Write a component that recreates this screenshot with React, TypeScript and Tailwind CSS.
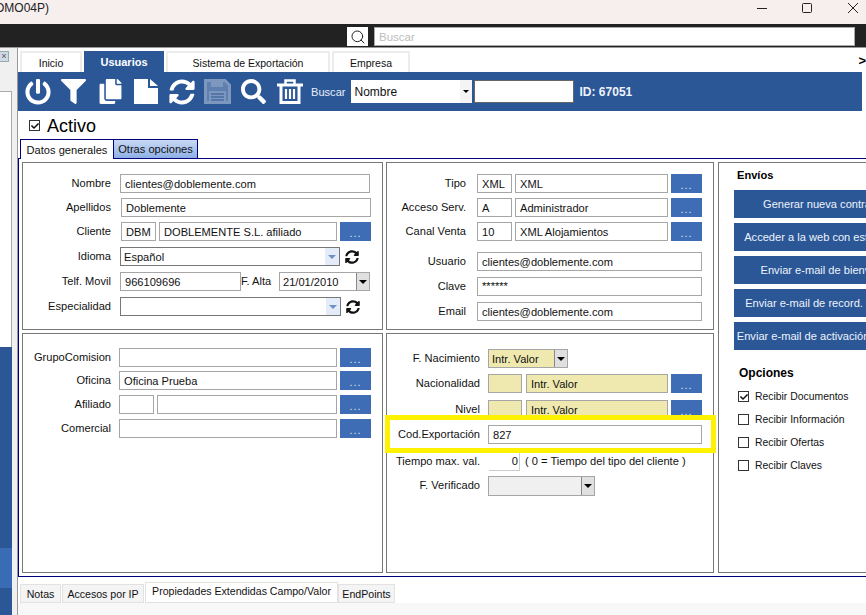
import React from "react";
import { FaPowerOff, FaFilter, FaCopy, FaSyncAlt, FaSearch, FaCheck } from "react-icons/fa";
import { Search } from "lucide-react";

const Lbl = ({ children, w }: { children: React.ReactNode; w: string }) => (
  <div className={`${w} shrink-0 text-right whitespace-nowrap pb-[2px]`}>{children}</div>
);

const Inp = ({ w, v, y, cls }: { w: string; v?: string; y?: boolean; cls?: string }) => (
  <div className={`${w} ${cls ?? ""} h-full shrink-0 border border-[#a6a6a6] pl-[4px] flex items-center whitespace-nowrap overflow-hidden ${y ? "bg-[#efe9b0]" : "bg-white"}`}>{v}</div>
);

const Dots = () => (
  <div className="w-[31px] h-full shrink-0 bg-[#3f6db5] text-[#dfe8f6] flex items-end justify-center pb-[2px] leading-[12px] text-[11px] tracking-[1px]">...</div>
);

const Combo = ({ w, v }: { w: string; v?: string }) => (
  <div className={`${w} h-full shrink-0 border border-[#777] bg-white pl-[3px] flex items-center justify-between`}>
    <span>{v}</span>
    <div className="w-[14px] h-full bg-[#e3ecf8] flex items-center justify-center">
      <div className="w-0 h-0 border-l-[4px] border-r-[4px] border-t-[4px] border-l-transparent border-r-transparent border-t-[#6d90c8]" />
    </div>
  </div>
);

const Drop = ({ w, v, bg }: { w: string; v?: string; bg: string }) => (
  <div className={`${w} ${bg} h-full shrink-0 border border-[#a6a6a6] pl-[3px] flex items-center justify-between`}>
    <span>{v}</span>
    <div className="w-[13px] h-full bg-[#e0e0e0] border-l border-[#888] flex items-center justify-center">
      <div className="w-0 h-0 border-l-[4px] border-r-[4px] border-t-[4px] border-l-transparent border-r-transparent border-t-black" />
    </div>
  </div>
);

const Tab = ({ w, t, active }: { w: string; t: string; active?: boolean }) => (
  <div className={`${w} h-[21px] flex items-center justify-center whitespace-nowrap ${active ? "bg-[#2b5797] text-white font-bold text-[11px]" : "bg-white border-2 border-b-0 border-[#ececec] text-[10.5px]"}`}>{t}</div>
);

const BTab = ({ w, t, active }: { w: string; t: string; active?: boolean }) => (
  <div className={`${w} flex items-center justify-center whitespace-nowrap border border-[#e2e2e2] text-[10.6px] ${active ? "h-[21px] bg-white pb-[3px]" : "h-[19px] bg-[#f4f4f4]"}`}>{t}</div>
);

const Box = ({ cls, children }: { cls: string; children: React.ReactNode }) => (
  <div className={`${cls} relative border border-[#777] bg-white flex flex-col shrink-0`}>{children}</div>
);

const SendBtn = ({ t }: { t: string }) => (
  <div className="w-[190px] h-[28px] bg-[#2b5797] text-[#eef3fb] flex items-center justify-center whitespace-nowrap mb-[5px]">{t}</div>
);

const Opt = ({ t, on }: { t: string; on?: boolean }) => (
  <div className="flex items-center h-[23px] pl-[19px]">
    <div className="w-[11px] h-[11px] border border-[#333] bg-white flex items-center justify-center mr-[6px]">
      {on && <FaCheck size={8} color="#111" />}
    </div>
    <span className="text-[10.4px]">{t}</span>
  </div>
);

const Sync = () => <FaSyncAlt size={14} color="#111" className="ml-[5px] shrink-0" />;

const FileIcon = () => (
  <svg width="24" height="25" viewBox="0 0 24 25" fill="#fff">
    <path d="M0 0H14V9H24V25H0Z" />
    <path d="M16 0L24 7H16Z" />
  </svg>
);

const SaveIcon = () => (
  <svg width="27" height="25" viewBox="0 0 27 25" fill="none">
    <path d="M1.5 1.5H21L25.5 6V23.5H1.5Z" stroke="#7e97bd" strokeWidth="3" fill="#5f7fb0" />
    <rect x="7" y="1" width="12" height="7" fill="#7e97bd" />
    <rect x="5" y="12" width="17" height="11" fill="#7e97bd" />
    <path d="M7 15H20M7 18H20M7 21H20" stroke="#2b5797" strokeWidth="1" />
  </svg>
);

const TrashIcon = () => (
  <svg width="26" height="25" viewBox="0 0 26 25" fill="none" stroke="#fff">
    <path d="M0 6H26" strokeWidth="3" />
    <path d="M8.5 5V1.5H17.5V5" strokeWidth="2.5" />
    <path d="M4 6V23.5H22V6" strokeWidth="3" />
    <path d="M9 10V20M13 10V20M17 10V20" strokeWidth="2.2" />
  </svg>
);

export default function App() {
  const rowL = "flex items-center h-[19px]";
  return (
    <div className="w-[866px] h-[615px] overflow-hidden flex flex-col bg-white text-[11.1px] leading-[14px] text-[#111] font-['Liberation_Sans',sans-serif]">
      {/* Title bar */}
      <div className="h-[24px] shrink-0 bg-[#f7eeee] flex items-center justify-between overflow-hidden">
        <span className="-ml-[5px] -mt-[9px] text-[12px] text-[#222]">OMO04P)</span>
        <div className="flex items-center">
          <svg width="120" height="24" viewBox="0 0 120 24" fill="none" stroke="#222" strokeWidth="1">
            <path d="M11 8.5H21" />
            <rect x="56.5" y="3.5" width="9" height="9" rx="1" />
            <path d="M102 3L112 13M112 3L102 13" />
          </svg>
        </div>
      </div>
      {/* Dark search bar */}
      <div className="h-[24px] shrink-0 bg-[#222222] flex items-start pt-[3px] pl-[347px] border-b border-[#999]">
        <div className="w-[21px] h-[19px] bg-white flex items-center justify-center">
          <Search size={16} color="#222" strokeWidth={1.5} />
        </div>
        <div className="w-[481px] h-[19px] ml-[6px] bg-white border border-[#aaa] pl-[4px] flex items-center text-[11.5px] text-[#bdbdbd]">Buscar</div>
      </div>
      {/* Body */}
      <div className="flex-1 flex min-h-0">
        {/* Left rail */}
        <div className="w-[18px] shrink-0 bg-[#f0f0f0] flex flex-col border-r border-[#999]">
          <div className="h-[43px] shrink-0 pt-[3px]">
            <div className="w-[9px] h-[11px] bg-[#cfd8e6] border-y border-r border-[#9aa] flex items-center justify-center text-[9px] leading-[9px] text-[#555]">×</div>
          </div>
          <div className="w-[12px] h-[256px] shrink-0 bg-white border-r border-t border-[#aaa]" />
          <div className="w-[12px] flex-1 bg-[#2b5797] flex flex-col">
            <div className="h-[201px] shrink-0" />
            <div className="h-[40px] shrink-0 bg-[#3a6cb5]" />
          </div>
        </div>
        {/* Main */}
        <div className="flex-1 min-w-0 flex flex-col">
          <div className="h-[24px] shrink-0 pt-[3px] pl-[2px] flex items-start gap-[2px]">
            <Tab w="w-[62px]" t="Inicio" />
            <Tab w="w-[80px]" t="Usuarios" active />
            <Tab w="w-[164px]" t="Sistema de Exportación" />
            <Tab w="w-[78px]" t="Empresa" />
            <div className="flex-1 flex justify-end text-[13px] font-bold text-black leading-[20px]">&gt;</div>
          </div>
          {/* Toolbar */}
          <div className="w-[844px] h-[39px] shrink-0 bg-[#2b5797] flex items-center pl-[7px] text-white">
            <div className="w-[36px] flex"><FaPowerOff size={26} /></div>
            <div className="w-[37px] flex"><FaFilter size={25} /></div>
            <div className="w-[36px] flex"><FaCopy size={25} /></div>
            <div className="w-[35px] flex"><FileIcon /></div>
            <div className="w-[35px] flex"><FaSyncAlt size={26} /></div>
            <div className="w-[37px] flex"><SaveIcon /></div>
            <div className="w-[36px] flex"><FaSearch size={25} /></div>
            <div className="w-[34px] flex"><TrashIcon /></div>
            <span className="text-[#e8eef8]">Buscar</span>
            <div className="w-[121px] h-[23px] ml-[5px] bg-white text-[#111] pl-[4px] flex items-center justify-between text-[12px]">
              <span>Nombre</span>
              <div className="w-[12px] h-full bg-[#f4f4f4] flex items-center justify-center">
                <div className="w-0 h-0 border-l-[3px] border-r-[3px] border-t-[3px] border-l-transparent border-r-transparent border-t-black" />
              </div>
            </div>
            <div className="w-[100px] h-[23px] ml-[2px] bg-white border border-[#666]" />
            <span className="ml-[6px] text-[12px] font-bold text-[#eef3fb]">ID: 67051</span>
          </div>
          {/* Activo */}
          <div className="h-[28px] shrink-0 flex items-center pl-[11px] pt-[1px]">
            <div className="w-[11px] h-[11px] border border-[#333] flex items-center justify-center mr-[7px]"><FaCheck size={8} color="#111" /></div>
            <span className="text-[18px] leading-[22px] text-black">Activo</span>
          </div>
          {/* Inner tabs */}
          <div className="h-[19px] shrink-0 flex pl-[2px]">
            <div className="w-[93px] h-[20px] bg-white border-l border-t border-[#00007f] flex items-center justify-center relative z-10">Datos generales</div>
            <div className="w-[85px] h-[19px] bg-gradient-to-b from-[#c9d9f3] to-[#8fb0e6] border border-b-0 border-[#00007f] flex items-center justify-center">Otras opciones</div>
          </div>
          {/* Frame */}
          <div className="h-[419px] shrink-0 border-t border-b border-l border-[#00007f] pl-[3px] pt-[3px] flex gap-[3px]">
            <div className="flex flex-col gap-[3px]">
              <Box cls="w-[361px] h-[168px]">
                <div className={`${rowL} mt-[11px]`}><Lbl w="w-[88px]">Nombre</Lbl><Inp cls="ml-[9px]" w="w-[250px]" v="clientes@doblemente.com" /></div>
                <div className={`${rowL} mt-[5px]`}><Lbl w="w-[88px]">Apellidos</Lbl><Inp cls="ml-[10px]" w="w-[250px]" v="Doblemente" /></div>
                <div className={`${rowL} mt-[5px]`}><Lbl w="w-[88px]">Cliente</Lbl><Inp cls="ml-[10px]" w="w-[35px]" v="DBM" /><Inp cls="ml-[3px]" w="w-[178px]" v="DOBLEMENTE S.L. afiliado" /><div className="w-[3px]" /><Dots /></div>
                <div className={`${rowL} mt-[6px]`}><Lbl w="w-[88px]">Idioma</Lbl><div className="w-[9px]" /><Combo w="w-[220px]" v="Español" /><Sync /></div>
                <div className={`${rowL} mt-[6px]`}><Lbl w="w-[88px]">Telf. Movil</Lbl><Inp cls="ml-[9px]" w="w-[121px]" v="966109696" /><span className="w-[38px] shrink-0 pb-[2px]">F. Alta</span><Drop w="w-[91px]" v="21/01/2010" bg="bg-white" /></div>
                <div className={`${rowL} mt-[6px]`}><Lbl w="w-[88px]">Especialidad</Lbl><div className="w-[9px]" /><Combo w="w-[221px]" /><Sync /></div>
              </Box>
              <Box cls="w-[361px] h-[240px]">
                <div className={`${rowL} mt-[14px]`}><Lbl w="w-[88px]">GrupoComision</Lbl><Inp cls="ml-[8px]" w="w-[218px]" /><div className="w-[3px]" /><Dots /></div>
                <div className={`${rowL} mt-[4px]`}><Lbl w="w-[88px]">Oficina</Lbl><Inp cls="ml-[8px]" w="w-[218px]" v="Oficina Prueba" /><div className="w-[3px]" /><Dots /></div>
                <div className={`${rowL} mt-[5px]`}><Lbl w="w-[88px]">Afiliado</Lbl><Inp cls="ml-[8px]" w="w-[35px]" /><Inp cls="ml-[3px]" w="w-[180px]" /><div className="w-[3px]" /><Dots /></div>
                <div className={`${rowL} mt-[5px]`}><Lbl w="w-[88px]">Comercial</Lbl><Inp cls="ml-[8px]" w="w-[218px]" /><div className="w-[3px]" /><Dots /></div>
              </Box>
            </div>
            <div className="flex flex-col gap-[3px]">
              <Box cls="w-[328px] h-[168px]">
                <div className={`${rowL} mt-[11px]`}><Lbl w="w-[79px]">Tipo</Lbl><Inp cls="ml-[11px]" w="w-[35px]" v="XML" /><Inp cls="ml-[3px]" w="w-[153px]" v="XML" /><div className="w-[3px]" /><Dots /></div>
                <div className={`${rowL} mt-[5px]`}><Lbl w="w-[79px]">Acceso Serv.</Lbl><Inp cls="ml-[11px]" w="w-[35px]" v="A" /><Inp cls="ml-[3px]" w="w-[153px]" v="Administrador" /><div className="w-[3px]" /><Dots /></div>
                <div className={`${rowL} mt-[5px]`}><Lbl w="w-[79px]">Canal Venta</Lbl><Inp cls="ml-[11px]" w="w-[35px]" v="10" /><Inp cls="ml-[3px]" w="w-[153px]" v="XML Alojamientos" /><div className="w-[3px]" /><Dots /></div>
                <div className={`${rowL} mt-[11px]`}><Lbl w="w-[79px]">Usuario</Lbl><Inp cls="ml-[11px]" w="w-[225px]" v="clientes@doblemente.com" /></div>
                <div className={`${rowL} mt-[6px]`}><Lbl w="w-[79px]">Clave</Lbl><Inp cls="ml-[11px] !items-start pt-[1px]" w="w-[225px]" v="******" /></div>
                <div className={`${rowL} mt-[6px]`}><Lbl w="w-[79px]">Email</Lbl><Inp cls="ml-[11px]" w="w-[225px]" v="clientes@doblemente.com" /></div>
              </Box>
              <Box cls="w-[328px] h-[240px]">
                <div className={`${rowL} mt-[15px]`}><Lbl w="w-[93px]">F. Nacimiento</Lbl><div className="w-[8px]" /><Drop w="w-[80px]" v="Intr. Valor" bg="bg-[#efe9b0]" /></div>
                <div className={`${rowL} mt-[6px]`}><Lbl w="w-[93px]">Nacionalidad</Lbl><Inp cls="ml-[8px]" w="w-[34px]" y /><Inp cls="ml-[4px]" w="w-[142px]" y v="Intr. Valor" /><div className="w-[3px]" /><Dots /></div>
                <div className={`${rowL} mt-[7px]`}><Lbl w="w-[93px]">Nivel</Lbl><Inp cls="ml-[8px]" w="w-[34px]" y /><Inp cls="ml-[4px]" w="w-[142px]" y v="Intr. Valor" /><div className="w-[3px]" /><Dots /></div>
                <div className={`${rowL} mt-[6px]`}><Lbl w="w-[93px]">Cod.Exportación</Lbl><Inp cls="ml-[8px]" w="w-[214px]" v="827" /></div>
                <div className={`${rowL} mt-[8px]`}><Lbl w="w-[93px]">Tiempo max. val.</Lbl><div className="w-[9px]" /><div className="w-[31px] h-full shrink-0 bg-white border-r border-b border-[#ccc] flex items-center justify-end pr-[1px]">0</div><span className="ml-[5px] whitespace-nowrap pb-[2px]">( 0 = Tiempo del tipo del cliente )</span></div>
                <div className={`${rowL} mt-[5px] !h-[20px]`}><Lbl w="w-[93px]">F. Verificado</Lbl><div className="w-[8px]" /><Drop w="w-[107px]" bg="bg-[#f0f0f0]" /></div>
                <div className="absolute top-[81px] -left-[2px] w-[331px] h-[38px] border-[5px] border-[#fff200]" />
              </Box>
            </div>
            <Box cls="ml-[1px] w-[194px] h-[411px] !border-r-0">
              <div className="font-bold pl-[18px] pt-[5px] h-[27px] text-black">Envíos</div>
              <div className="pl-[15px]">
                <SendBtn t="Generar nueva contraseña" />
                <SendBtn t="Acceder a la web con este usuario" />
                <SendBtn t="Enviar e-mail de bienvenida" />
                <SendBtn t="Enviar e-mail de record. de claves" />
                <SendBtn t="Enviar e-mail de activación de cuenta" />
              </div>
              <div className="font-bold text-[12px] pl-[20px] pt-[11px] h-[30px] text-black">Opciones</div>
              <Opt t="Recibir Documentos" on />
              <Opt t="Recibir Información" />
              <Opt t="Recibir Ofertas" />
              <Opt t="Recibir Claves" />
            </Box>
          </div>
          {/* Bottom tabs */}
          <div className="h-[26px] shrink-0 flex items-end pl-[2px]">
            <BTab w="w-[41px]" t="Notas" />
            <div className="w-[1px]" />
            <BTab w="w-[82px]" t="Accesos por IP" />
            <div className="w-[1px]" />
            <BTab w="w-[193px]" t="Propiedades Extendidas Campo/Valor" active />
            <BTab w="w-[57px]" t="EndPoints" />
          </div>
          <div className="flex-1 bg-[#f8f8f8]" />
        </div>
      </div>
    </div>
  );
}
